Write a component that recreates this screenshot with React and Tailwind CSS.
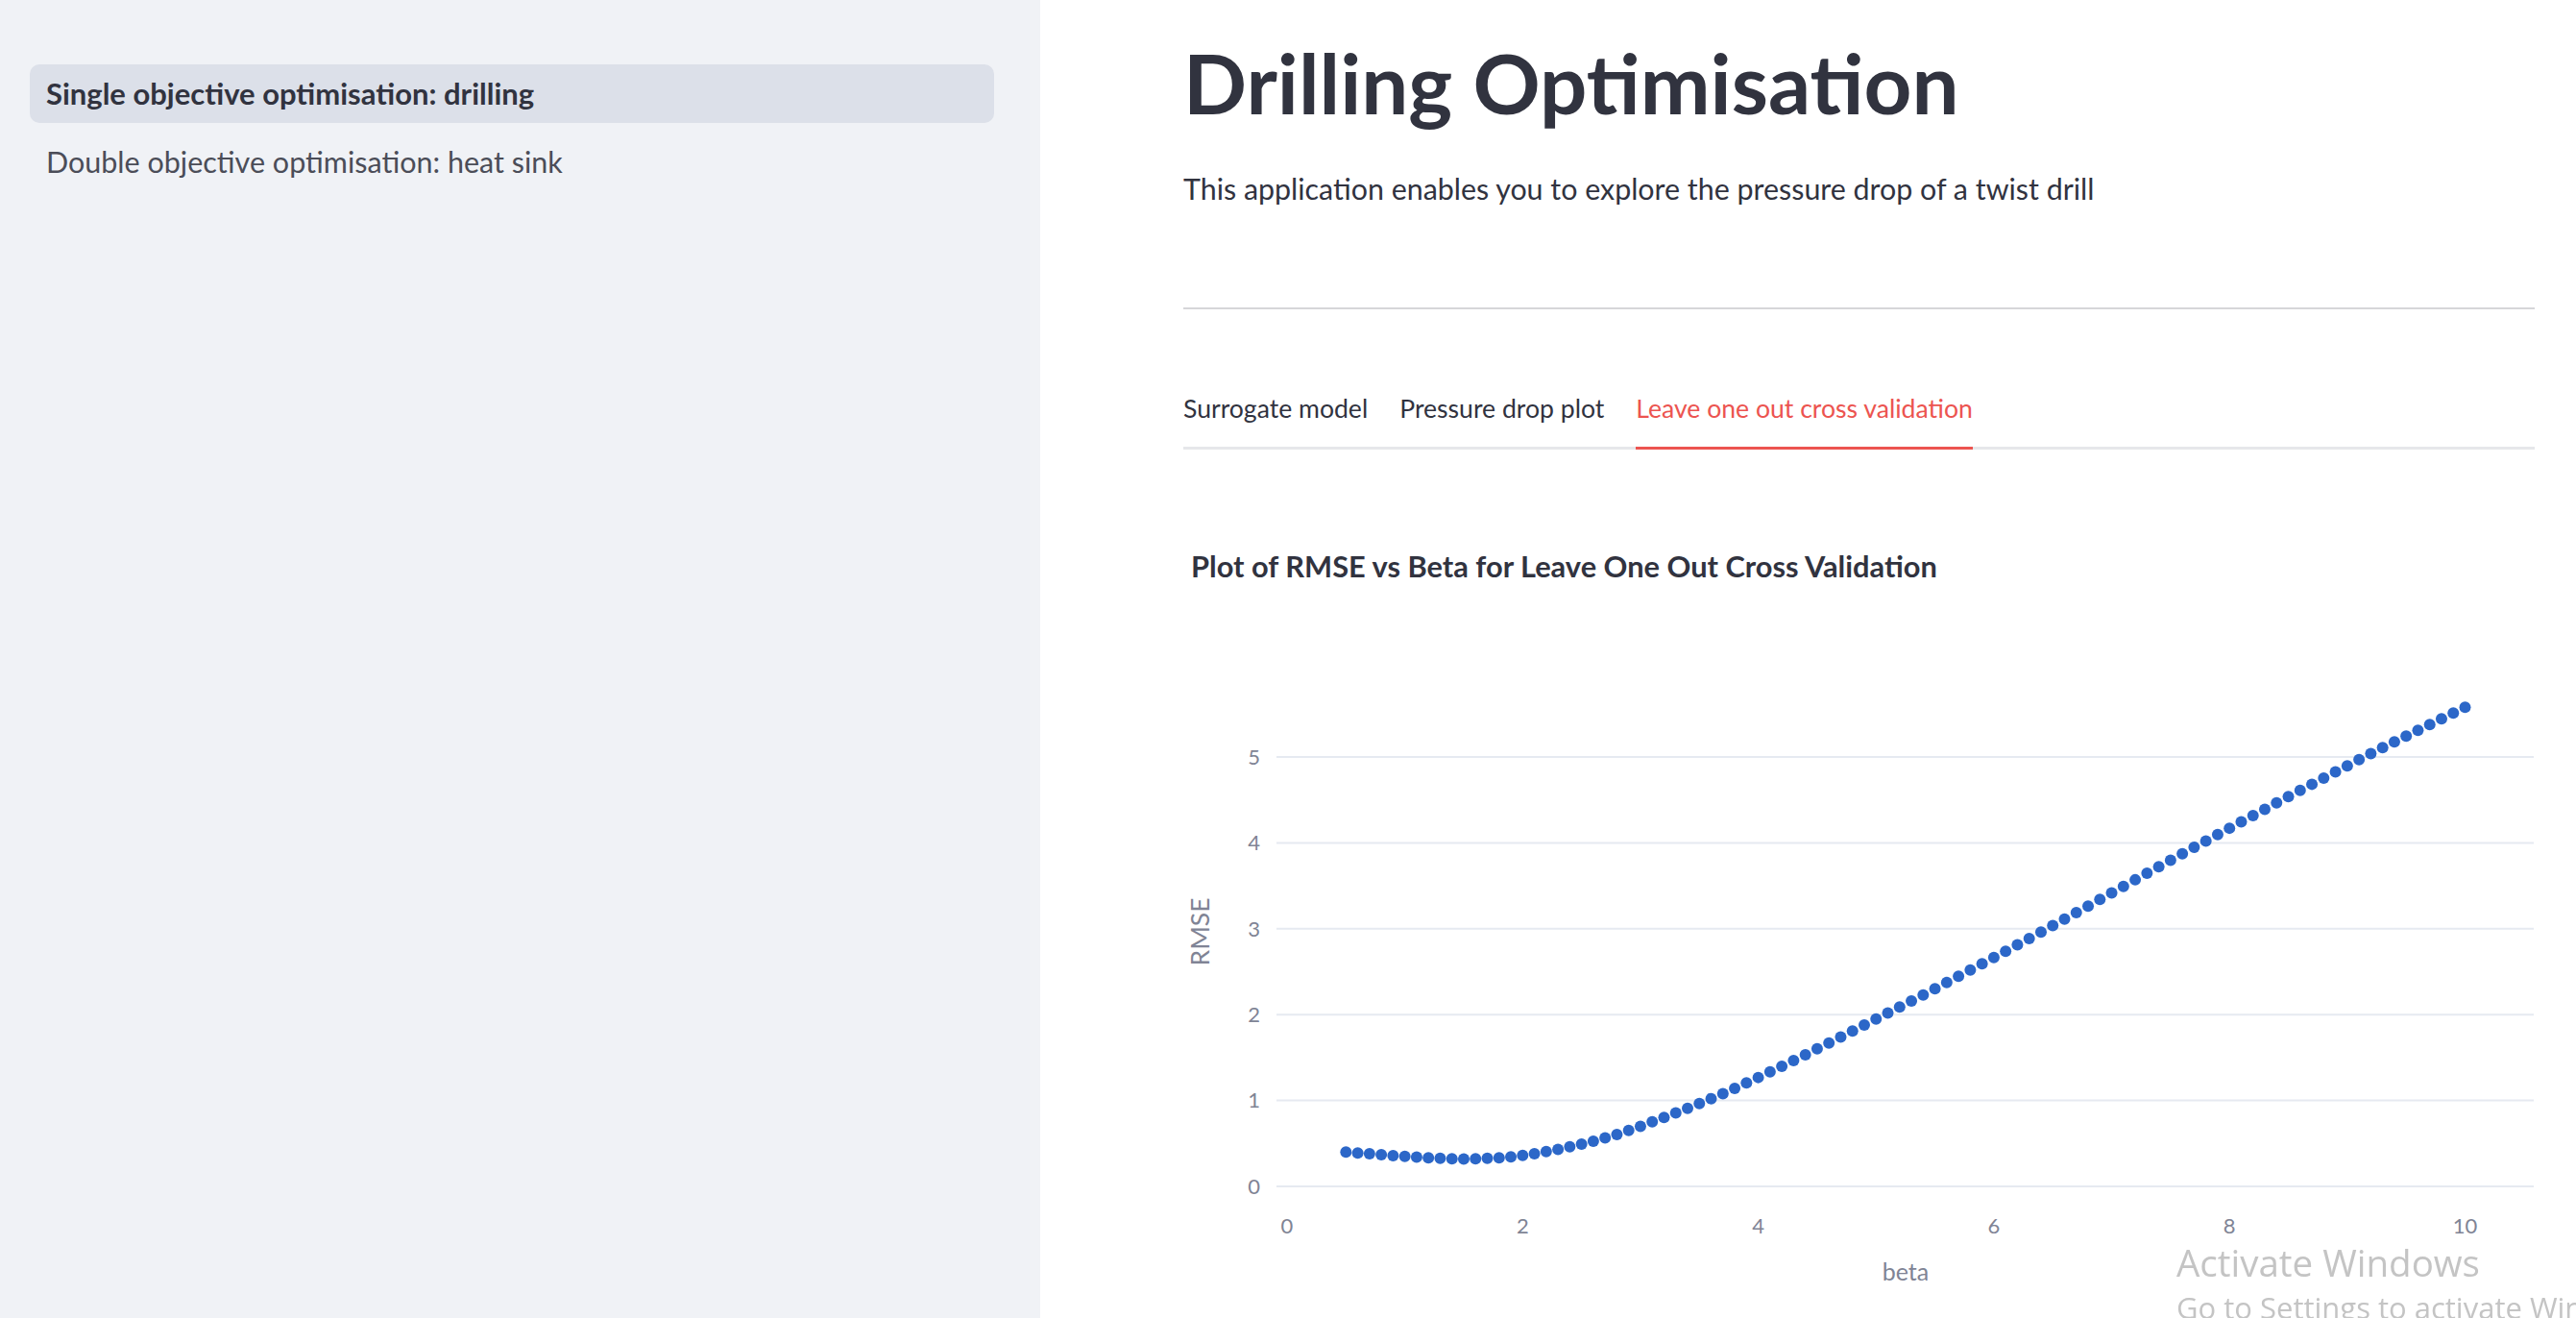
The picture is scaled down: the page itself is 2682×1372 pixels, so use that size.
import React from "react";

// rough shape of the LOOCV curve, read off the original plot
const ctrl = [
  [0.5, 0.4], [1.0, 0.35], [1.5, 0.32], [2.0, 0.36], [2.58, 0.52], [3.0, 0.7],
  [3.83, 1.16], [5.06, 1.99], [6.21, 2.82], [7.81, 4.03], [9.13, 4.99], [10, 5.58],
];

function slopeAt(k) {
  const n = ctrl.length;
  if (k === 0) return (ctrl[1][1] - ctrl[0][1]) / (ctrl[1][0] - ctrl[0][0]);
  if (k === n - 1) return (ctrl[n - 1][1] - ctrl[n - 2][1]) / (ctrl[n - 1][0] - ctrl[n - 2][0]);
  return (ctrl[k + 1][1] - ctrl[k - 1][1]) / (ctrl[k + 1][0] - ctrl[k - 1][0]);
}

function rmseAt(b) {
  let i = 0;
  while (i < ctrl.length - 2 && b > ctrl[i + 1][0]) i++;
  const [x0, y0] = ctrl[i];
  const [x1, y1] = ctrl[i + 1];
  const h = x1 - x0;
  const t = (b - x0) / h;
  const t2 = t * t;
  const t3 = t2 * t;
  return (
    (2 * t3 - 3 * t2 + 1) * y0 +
    (t3 - 2 * t2 + t) * h * slopeAt(i) +
    (-2 * t3 + 3 * t2) * y1 +
    (t3 - t2) * h * slopeAt(i + 1)
  );
}

const points = Array.from({ length: 96 }, (_, k) => {
  const b = 0.5 + k * 0.1;
  return [b, rmseAt(b)];
});

const xpx = (b) => 108 + 122.65 * b;
const ypx = (r) => 696 - 89.4 * r;

const font = "Lato, 'Open Sans', sans-serif";

const RmsePlot = () => {
  return (
    <svg width="1407" height="832" viewBox="0 0 1407 832" style={{ fontFamily: font }}>
      <text x="8" y="62" fontSize="30.8" fontWeight="700" fill="#31333f">
        Plot of RMSE vs Beta for Leave One Out Cross Validation
      </text>
      {[0, 1, 2, 3, 4, 5].map((r) => (
        <g key={r}>
          <line x1="97" x2="1406" y1={ypx(r)} y2={ypx(r)} stroke="#e6eaf1" strokeWidth="2" />
          <text x="80" y={ypx(r)} dy="0.35em" textAnchor="end" fontSize="22" fill="#808495">
            {r}
          </text>
        </g>
      ))}
      {[0, 2, 4, 6, 8, 10].map((b) => (
        <text key={b} x={xpx(b)} y="737" dy="0.35em" textAnchor="middle" fontSize="22" fill="#808495">
          {b}
        </text>
      ))}
      <text x="752" y="785" dy="0.35em" textAnchor="middle" fontSize="25" fill="#808495">
        beta
      </text>
      <text
        x="18"
        y="431"
        dy="0.35em"
        textAnchor="middle"
        fontSize="26.5"
        fill="#808495"
        transform="rotate(-90 18 431)"
      >
        RMSE
      </text>
      {points.map(([b, r]) => (
        <circle key={b} cx={xpx(b)} cy={ypx(r)} r="6" fill="#2c67c8" />
      ))}
    </svg>
  );
};

const NavItem = ({ label, active }) => (
  <div
    className={`h-[61px] flex items-center pl-[17px] rounded-[10px] ${
      active ? "bg-[#dce0e9] font-bold text-[31px] text-[#31333f]" : "text-[30.5px] text-[#4b4d58]"
    }`}
  >
    {label}
  </div>
);

const tabs = ["Surrogate model", "Pressure drop plot", "Leave one out cross validation"];

export default function App() {
  return (
    <div className="flex w-full h-[1372px] overflow-hidden bg-white" style={{ fontFamily: font }}>
      <aside className="w-[1083px] shrink-0 bg-[#f0f2f6] pt-[67px] pl-[31px] pr-[48px] flex flex-col gap-[10px]">
        <NavItem label="Single objective optimisation: drilling" active />
        <NavItem label="Double objective optimisation: heat sink" />
      </aside>

      <main className="flex-1 pl-[149px] pr-[43px] pt-[42px] text-[#31333f]">
        <h1 className="text-[87px] leading-none font-bold">Drilling Optimisation</h1>
        <p className="mt-[49px] text-[30.4px] leading-[1.2]">
          This application enables you to explore the pressure drop of a twist drill
        </p>
        <div className="mt-[106px] h-[2px] bg-[#d6d6d9]" />

        <div className="mt-[88px] flex gap-[33px] border-b-[3px] border-[#e6e7ea]">
          {tabs.map((t, i) => (
            <div
              key={t}
              className={`-mb-[3px] pb-[23px] border-b-[3px] text-[26.6px] leading-[1.2] ${
                i === 2 ? "border-[#ec5450] text-[#ec5450]" : "border-transparent"
              }`}
            >
              {t}
            </div>
          ))}
        </div>

        <div className="mt-[71px]">
          <RmsePlot />
        </div>
      </main>

      <div
        className="fixed left-[2266px] top-[1291px] text-[#c4c4c4] pointer-events-none"
        style={{ fontFamily: "'Open Sans', sans-serif" }}
      >
        <div className="text-[38.5px] leading-[1.2]">Activate Windows</div>
        <div className="text-[31px] leading-[1.2] mt-[6px] whitespace-nowrap">Go to Settings to activate Windows</div>
      </div>
    </div>
  );
}
